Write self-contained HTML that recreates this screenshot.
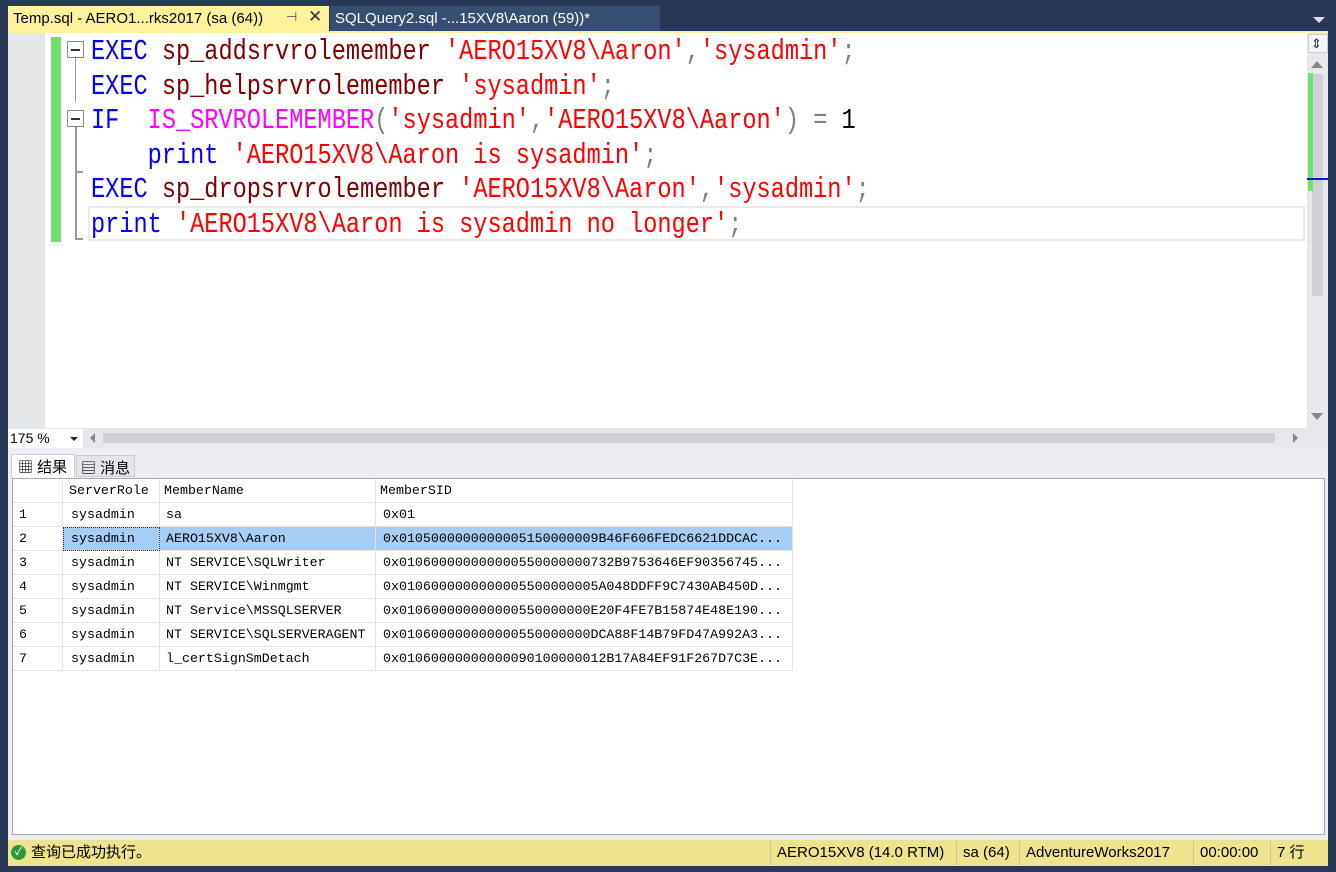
<!DOCTYPE html>
<html><head><meta charset="utf-8"><style>
*{margin:0;padding:0;box-sizing:border-box}
body{width:1336px;height:872px;background:#293955;position:relative;overflow:hidden;font-family:"Liberation Sans","Noto Sans CJK SC",sans-serif}
.a{position:absolute}
.code{position:absolute;left:91px;font-family:"Liberation Mono","Noto Sans CJK SC",monospace;font-size:23.6px;line-height:34.6px;height:34.6px;white-space:pre;transform:scaleY(1.22);transform-origin:0 50%}
.k{color:#0000ff}.s{color:#ff0000}.p{color:#800000}.m{color:#ff00ff}.g{color:#808080}.b{color:#000}
.grid{position:absolute;font-family:"Liberation Mono","Noto Sans CJK SC",monospace;font-size:13.3px;white-space:pre;color:#000}
.cell{position:absolute;height:24px;line-height:24px;border-right:1px solid #e4e4e4;border-bottom:1px solid #e4e4e4;padding-left:6px;overflow:hidden}
.st{position:absolute;top:841px;height:24px;line-height:24px;font-size:15px;color:#000;border-left:1px solid #c8c090;padding:0 6px}
</style></head><body>
<div class="a" style="left:8px;top:6px;width:321px;height:27px;background:#fff29d"></div>
<div class="a" style="left:13px;top:10px;font-size:15px;color:#000">Temp.sql - AERO1...rks2017 (sa (64))</div>
<div class="a" style="left:286px;top:9px;font-size:13px;color:#555">⊣</div>
<div class="a" style="left:308px;top:7px;font-size:17px;color:#333">✕</div>
<div class="a" style="left:330px;top:6px;width:330px;height:27px;background:#364e6f"></div>
<div class="a" style="left:335px;top:10px;font-size:15px;color:#fff">SQLQuery2.sql -...15XV8\Aaron (59))*</div>
<div class="a" style="left:1313px;top:17px;width:0;height:0;border-left:6px solid transparent;border-right:6px solid transparent;border-top:6px solid #dde"></div>
<div class="a" style="left:8px;top:31px;width:1320px;height:2px;background:#fff29d"></div>
<div class="a" style="left:8px;top:33px;width:1299px;height:395px;background:#fff"></div>
<div class="a" style="left:8px;top:33px;width:37px;height:395px;background:#e6e7e8"></div>
<div class="a" style="left:51px;top:37px;width:10px;height:205px;background:#6ee06e"></div>
<div class="a" style="left:67px;top:41px;width:17px;height:17px;border:1px solid #888;background:#fff"></div>
<div class="a" style="left:71px;top:49px;width:9px;height:2px;background:#333"></div>
<div class="a" style="left:75px;top:58px;width:1px;height:44px;background:#999"></div>
<div class="a" style="left:67px;top:110px;width:17px;height:17px;border:1px solid #888;background:#fff"></div>
<div class="a" style="left:71px;top:118px;width:9px;height:2px;background:#333"></div>
<div class="a" style="left:75px;top:127px;width:2px;height:44px;background:#999"></div>
<div class="a" style="left:75px;top:171px;width:8px;height:2px;background:#999"></div>
<div class="a" style="left:75px;top:173px;width:2px;height:67px;background:#999"></div>
<div class="a" style="left:75px;top:238px;width:8px;height:2px;background:#999"></div>
<div class="a" style="left:88px;top:206px;width:1217px;height:35px;border:2px solid #eaeaea"></div>
<div class="code" style="top:36px"><span class="k">EXEC</span> <span class="p">sp_addsrvrolemember</span> <span class="s">'AERO15XV8\Aaron'</span><span class="g">,</span><span class="s">'sysadmin'</span><span class="g">;</span></div>
<div class="code" style="top:70.6px"><span class="k">EXEC</span> <span class="p">sp_helpsrvrolemember</span> <span class="s">'sysadmin'</span><span class="g">;</span></div>
<div class="code" style="top:105.2px"><span class="k">IF</span>  <span class="m">IS_SRVROLEMEMBER</span><span class="g">(</span><span class="s">'sysadmin'</span><span class="g">,</span><span class="s">'AERO15XV8\Aaron'</span><span class="g">) =</span> <span class="b">1</span></div>
<div class="code" style="top:139.8px">    <span class="k">print</span> <span class="s">'AERO15XV8\Aaron is sysadmin'</span><span class="g">;</span></div>
<div class="code" style="top:174.4px"><span class="k">EXEC</span> <span class="p">sp_dropsrvrolemember</span> <span class="s">'AERO15XV8\Aaron'</span><span class="g">,</span><span class="s">'sysadmin'</span><span class="g">;</span></div>
<div class="code" style="top:209px"><span class="k">print</span> <span class="s">'AERO15XV8\Aaron is sysadmin no longer'</span><span class="g">;</span></div>
<div class="a" style="left:1307px;top:33px;width:21px;height:395px;background:#e8e8ec"></div>
<div class="a" style="left:1308px;top:34px;width:20px;height:19px;background:#f4f4f8;border:1px solid #ccc"></div>
<div class="a" style="left:1311px;top:38px;font-size:13px;color:#223;line-height:12px">⇕</div>
<div class="a" style="left:1311px;top:61px;width:0;height:0;border-left:6px solid transparent;border-right:6px solid transparent;border-bottom:7px solid #888"></div>
<div class="a" style="left:1312px;top:74px;width:11px;height:222px;background:#d0d0d6"></div>
<div class="a" style="left:1308px;top:73px;width:5px;height:118px;background:#6ee06e"></div>
<div class="a" style="left:1307px;top:178px;width:21px;height:2px;background:#1010d0"></div>
<div class="a" style="left:1311px;top:413px;width:0;height:0;border-left:6px solid transparent;border-right:6px solid transparent;border-top:7px solid #888"></div>
<div class="a" style="left:8px;top:428px;width:1320px;height:20px;background:#e8e8ec"></div>
<div class="a" style="left:8px;top:429px;width:75px;height:19px;background:#fff;font-size:14px;line-height:19px;padding-left:2px;color:#000">175 %</div>
<div class="a" style="left:70px;top:437px;width:0;height:0;border-left:4px solid transparent;border-right:4px solid transparent;border-top:4px solid #222"></div>
<div class="a" style="left:90px;top:433px;width:0;height:0;border-top:5px solid transparent;border-bottom:5px solid transparent;border-right:5px solid #888"></div>
<div class="a" style="left:103px;top:433px;width:1172px;height:10px;background:#d0d0d6"></div>
<div class="a" style="left:1293px;top:433px;width:0;height:0;border-top:5px solid transparent;border-bottom:5px solid transparent;border-left:5px solid #888"></div>
<div class="a" style="left:8px;top:448px;width:1320px;height:392px;background:#eeeef2"></div>
<div class="a" style="left:11px;top:454px;width:64px;height:24px;background:#fff;border:1px solid #ccc;border-bottom:none"></div>
<div class="a" style="left:18px;top:456px;font-size:15px;color:#000">▦ 结果</div>
<div class="a" style="left:76px;top:455px;width:59px;height:22px;background:#e6e6ea;border:1px solid #ccc"></div>
<div class="a" style="left:81px;top:457px;font-size:15px;color:#000">▤ 消息</div>
<div class="a" style="left:12px;top:478px;width:1313px;height:357px;background:#fff;border:1px solid #aaa"></div>
<div class="grid" style="left:13px;top:479px">
<div class="cell" style="left:0;top:0;width:50px;background:#fff"></div>
<div class="cell" style="left:50px;top:0;width:97px">ServerRole</div>
<div class="cell" style="left:147px;top:0;width:216px;padding-left:4px">MemberName</div>
<div class="cell" style="left:363px;top:0;width:417px;padding-left:4px">MemberSID</div>
<div class="cell" style="left:0;top:24px;width:50px">1</div><div class="cell" style="left:50px;top:24px;width:97px;padding-left:8px">sysadmin</div><div class="cell" style="left:147px;top:24px;width:216px">sa</div><div class="cell" style="left:363px;top:24px;width:417px;padding-left:7px">0x01</div>
<div class="cell" style="left:0;top:48px;width:50px">2</div><div class="cell" style="left:50px;top:48px;width:97px;padding-left:8px;background:#a6cef4;outline:1px dotted #333;outline-offset:-1px">sysadmin</div><div class="cell" style="left:147px;top:48px;width:216px;background:#a6cef4">AERO15XV8\Aaron</div><div class="cell" style="left:363px;top:48px;width:417px;padding-left:7px;background:#a6cef4">0x0105000000000005150000009B46F606FEDC6621DDCAC...</div>
<div class="cell" style="left:0;top:72px;width:50px">3</div><div class="cell" style="left:50px;top:72px;width:97px;padding-left:8px">sysadmin</div><div class="cell" style="left:147px;top:72px;width:216px">NT SERVICE\SQLWriter</div><div class="cell" style="left:363px;top:72px;width:417px;padding-left:7px">0x010600000000000550000000732B9753646EF90356745...</div>
<div class="cell" style="left:0;top:96px;width:50px">4</div><div class="cell" style="left:50px;top:96px;width:97px;padding-left:8px">sysadmin</div><div class="cell" style="left:147px;top:96px;width:216px">NT SERVICE\Winmgmt</div><div class="cell" style="left:363px;top:96px;width:417px;padding-left:7px">0x0106000000000005500000005A048DDFF9C7430AB450D...</div>
<div class="cell" style="left:0;top:120px;width:50px">5</div><div class="cell" style="left:50px;top:120px;width:97px;padding-left:8px">sysadmin</div><div class="cell" style="left:147px;top:120px;width:216px">NT Service\MSSQLSERVER</div><div class="cell" style="left:363px;top:120px;width:417px;padding-left:7px">0x010600000000000550000000E20F4FE7B15874E48E190...</div>
<div class="cell" style="left:0;top:144px;width:50px">6</div><div class="cell" style="left:50px;top:144px;width:97px;padding-left:8px">sysadmin</div><div class="cell" style="left:147px;top:144px;width:216px">NT SERVICE\SQLSERVERAGENT</div><div class="cell" style="left:363px;top:144px;width:417px;padding-left:7px">0x010600000000000550000000DCA88F14B79FD47A992A3...</div>
<div class="cell" style="left:0;top:168px;width:50px">7</div><div class="cell" style="left:50px;top:168px;width:97px;padding-left:8px">sysadmin</div><div class="cell" style="left:147px;top:168px;width:216px">l_certSignSmDetach</div><div class="cell" style="left:363px;top:168px;width:417px;padding-left:7px">0x01060000000000090100000012B17A84EF91F267D7C3E...</div>
</div>
<div class="a" style="left:8px;top:840px;width:1320px;height:26px;background:#efe48e"></div>
<div class="a" style="left:11px;top:845px;width:15px;height:15px;border-radius:50%;background:#2a9a3a;color:#fff;font-size:11px;line-height:15px;text-align:center">✓</div>
<div class="a" style="left:31px;top:841px;font-size:15px;line-height:24px;color:#000">查询已成功执行。</div>
<div class="st" style="left:770px">AERO15XV8 (14.0 RTM)</div>
<div class="st" style="left:956px">sa (64)</div>
<div class="st" style="left:1019px">AdventureWorks2017</div>
<div class="st" style="left:1193px">00:00:00</div>
<div class="st" style="left:1270px">7 行</div>
</body></html>
